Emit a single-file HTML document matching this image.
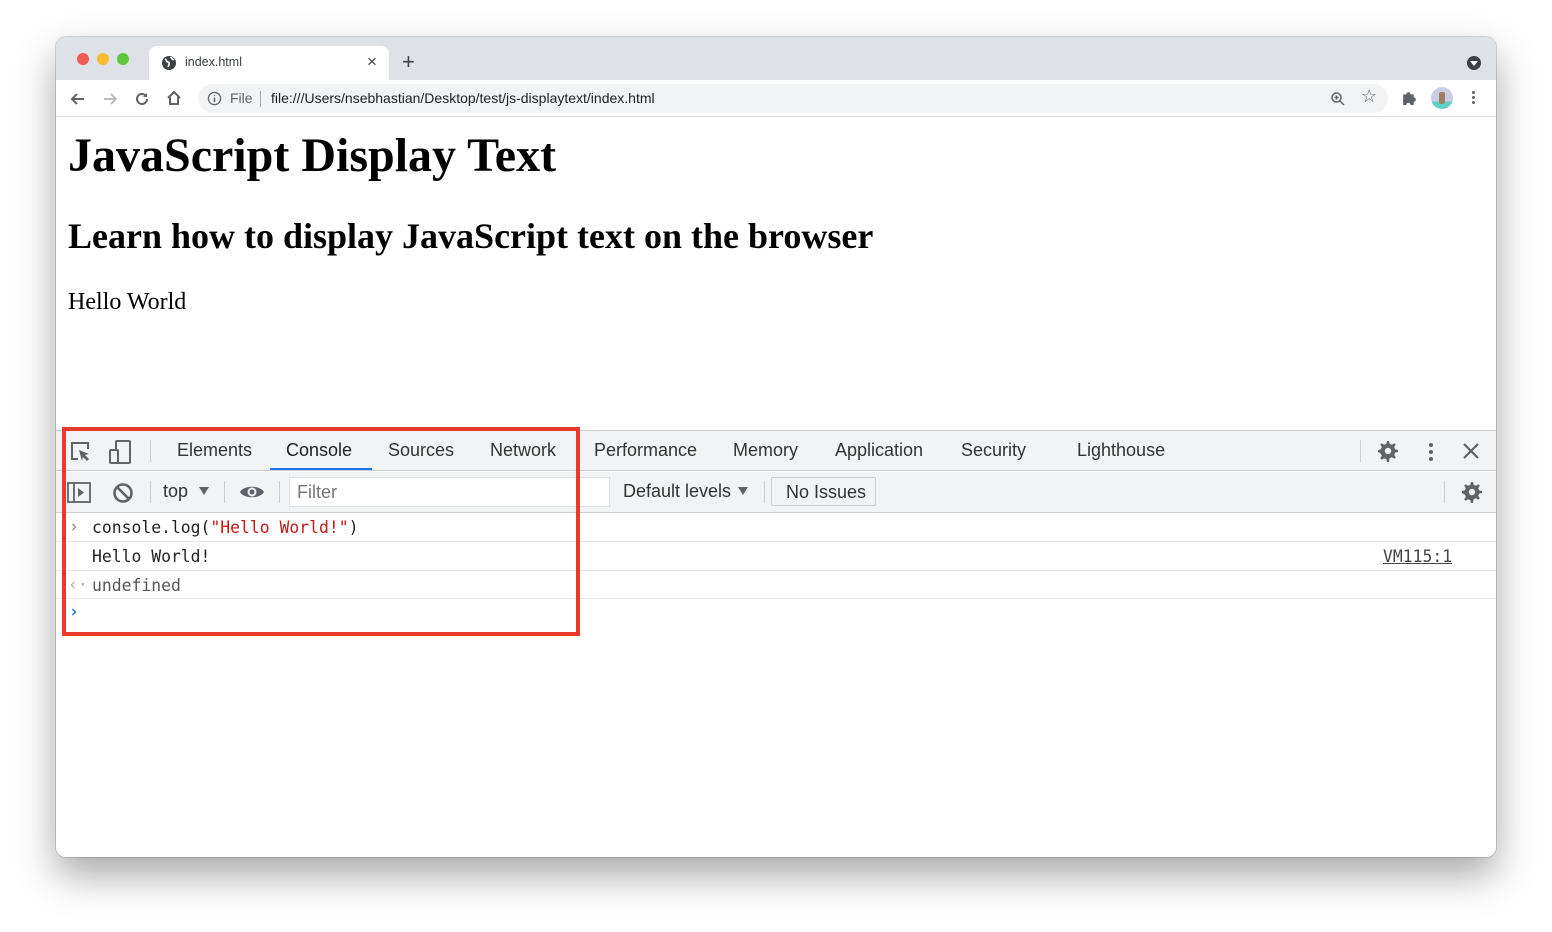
<!DOCTYPE html>
<html><head><meta charset="utf-8"><style>
*{box-sizing:border-box;margin:0;padding:0}
body{width:1552px;height:932px;background:#fff;position:relative;overflow:hidden;font-family:"Liberation Sans",sans-serif}
.win{position:absolute;left:56px;top:37px;width:1440px;height:820px;border-radius:10px;overflow:hidden;background:#fff;box-shadow:0 18px 40px rgba(0,0,0,.35),0 0 0 1px rgba(0,0,0,.15)}
.tabbar{position:absolute;left:0;top:0;width:1440px;height:43px;background:#dee1e6}
.dot{position:absolute;top:16px;width:12px;height:12px;border-radius:50%}
.tab{position:absolute;left:93px;top:9px;width:240px;height:34px;background:#fff;border-radius:8px 8px 0 0}
.tb{position:absolute;left:0;top:43px;width:1440px;height:37px;background:#fff;border-bottom:1px solid #dadce0}
.omni{position:absolute;left:142px;top:4px;width:1190px;height:29px;background:#f1f3f4;border-radius:15px}
.abs{position:absolute}
.dt{position:absolute;left:0;top:393px;width:1440px;height:427px;background:#fff;border-top:1px solid #cbcdd1}
.dtt{position:absolute;left:0;top:0;width:1440px;height:40px;background:#f1f3f4;border-bottom:1px solid #cbcdd1;font-size:18px;color:#333}
.dtc{position:absolute;left:0;top:41px;width:1440px;height:41px;background:#f1f3f4;border-bottom:1px solid #cbcdd1;font-size:18px;color:#333}
.mono{font-family:"DejaVu Sans Mono","Liberation Mono",monospace;font-size:16.4px;color:#222}
.row{position:absolute;left:0;width:1440px;border-bottom:1px solid #e8e8e8}
.sep{position:absolute;width:1px;background:#ccc}
</style></head><body>
<div class="win">
 <div class="tabbar">
  <div class="dot" style="left:21px;background:#ee5c54"></div>
  <div class="dot" style="left:41px;background:#f8bd2e"></div>
  <div class="dot" style="left:61px;background:#5fc73f"></div>
  <div class="tab">
   <svg class="abs" style="left:12px;top:9px" width="16" height="16" viewBox="0 0 16 16"><circle cx="8" cy="8" r="7" fill="#3c4043"/><path d="M4 4c2 1 1 3 3 3s1 3 0 5M10 2c0 2 2 2 3 3" stroke="#fff" stroke-width="1.6" fill="none"/></svg>
   <div class="abs" style="left:36px;top:9px;font-size:12.5px;color:#3c4043">index.html</div>
   <div class="abs" style="left:218px;top:6px;font-size:17px;color:#3c4043">×</div>
  </div>
  <div class="abs" style="left:346px;top:14px;font-size:22px;color:#3c4043;line-height:22px">+</div>
  <div class="abs" style="left:1411px;top:19px;width:14px;height:14px;border-radius:50%;background:#3c4043"><div style="position:absolute;left:3px;top:5px;border-left:4px solid transparent;border-right:4px solid transparent;border-top:5px solid #fff"></div></div>
 </div>
 <div class="tb">
  <svg class="abs" style="left:12px;top:9px" width="20" height="20" viewBox="0 0 20 20"><path d="M16 10H4M9 5l-5 5 5 5" stroke="#5f6368" stroke-width="2" fill="none"/></svg>
  <svg class="abs" style="left:44px;top:9px" width="20" height="20" viewBox="0 0 20 20"><path d="M4 10h12M11 5l5 5-5 5" stroke="#bbb" stroke-width="2" fill="none"/></svg>
  <svg class="abs" style="left:76px;top:9px" width="20" height="20" viewBox="0 0 20 20"><path d="M15 10a5 5 0 1 1-1.5-3.6" stroke="#5f6368" stroke-width="2" fill="none"/><path d="M15 4v4h-4z" fill="#5f6368"/></svg>
  <svg class="abs" style="left:108px;top:8px" width="20" height="20" viewBox="0 0 20 20"><path d="M4 10l6-6 6 6M6 9v7h8V9" stroke="#5f6368" stroke-width="2" fill="none"/></svg>
  <div class="omni">
   <svg class="abs" style="left:9px;top:7px" width="15" height="15" viewBox="0 0 16 16"><circle cx="8" cy="8" r="6.5" stroke="#5f6368" stroke-width="1.4" fill="none"/><path d="M8 7v5M8 4.5v1" stroke="#5f6368" stroke-width="1.6"/></svg>
   <div class="abs" style="left:32px;top:6px;font-size:14px;color:#5f6368">File</div>
   <div class="abs" style="left:62px;top:7px;width:1px;height:16px;background:#aaa"></div>
   <div class="abs" style="left:73px;top:6px;font-size:14px;color:#202124">file:///Users/nsebhastian/Desktop/test/js-displaytext/index.html</div>
   <svg class="abs" style="left:1132px;top:7px" width="16" height="16" viewBox="0 0 16 16"><circle cx="6.5" cy="6.5" r="4.5" stroke="#5f6368" stroke-width="1.5" fill="none"/><path d="M10 10l4 4M4.5 6.5h4M6.5 4.5v4" stroke="#5f6368" stroke-width="1.5"/></svg>
   <div class="abs" style="left:1163px;top:2px;font-size:18px;color:#5f6368">☆</div>
  </div>
  <svg class="abs" style="left:1345px;top:9px" width="17" height="17" viewBox="0 0 16 16"><path d="M2 5h3a2 2 0 1 1 4 0h3v3a2 2 0 1 1 0 4v3H9a2 2 0 1 0-4 0H2z" fill="#5f6368"/></svg>
  <div class="abs" style="left:1375px;top:7px;width:22px;height:22px;border-radius:50%;background:linear-gradient(#c9cde8 65%,#5fd0c8 65%)"><div style="position:absolute;left:8px;top:5px;width:6px;height:12px;background:#a08060;border-radius:2px"></div></div>
  <div class="abs" style="left:1416px;top:11px;width:3px;height:3px;border-radius:50%;background:#5f6368;box-shadow:0 5px #5f6368,0 10px #5f6368"></div>
 </div>
 <div class="abs" style="left:12px;top:89px;font-family:'Liberation Serif',serif;font-weight:bold;font-size:48px;color:#000;line-height:60px">JavaScript Display Text</div>
 <div class="abs" style="left:12px;top:176px;font-family:'Liberation Serif',serif;font-weight:bold;font-size:36px;color:#000;line-height:46px">Learn how to display JavaScript text on the browser</div>
 <div class="abs" style="left:12px;top:250px;font-family:'Liberation Serif',serif;font-size:24px;color:#000;line-height:30px">Hello World</div>

 <div class="dt">
  <div class="dtt">
   <svg class="abs" style="left:13px;top:9px" width="24" height="24" viewBox="0 0 24 24"><path d="M9 19H3V3h16v6" stroke="#5f6368" stroke-width="2" fill="none"/><path d="M10 10l10 4-4 1 4 4-2 2-4-4-1 4z" fill="#5f6368"/></svg>
   <svg class="abs" style="left:52px;top:8px" width="26" height="26" viewBox="0 0 26 26"><rect x="8" y="2" width="14" height="22" rx="1" stroke="#5f6368" stroke-width="2" fill="none"/><rect x="2" y="11" width="8" height="13" rx="1" stroke="#5f6368" stroke-width="2" fill="#f1f3f4"/></svg>
   <div class="sep" style="left:94px;top:9px;height:22px"></div>
   <div class="abs" style="left:121px;top:9px">Elements</div>
   <div class="abs" style="left:230px;top:9px;color:#202124">Console</div>
   <div class="abs" style="left:214px;top:37px;width:102px;height:2px;background:#1a73e8"></div>
   <div class="abs" style="left:332px;top:9px">Sources</div>
   <div class="abs" style="left:434px;top:9px">Network</div>
   <div class="abs" style="left:538px;top:9px">Performance</div>
   <div class="abs" style="left:677px;top:9px">Memory</div>
   <div class="abs" style="left:779px;top:9px">Application</div>
   <div class="abs" style="left:905px;top:9px">Security</div>
   <div class="abs" style="left:1021px;top:9px">Lighthouse</div>
   <div class="sep" style="left:1304px;top:9px;height:22px"></div>
   <svg class="abs" style="left:1320px;top:8px" width="24" height="24" viewBox="0 0 24 24"><path d="M12 2l2 0 .6 2.8 2.3 1 2.4-1.6 1.5 1.5-1.6 2.4 1 2.3L23 11v2l-2.8.6-1 2.3 1.6 2.4-1.5 1.5-2.4-1.6-2.3 1L14 23h-2l-.6-2.8-2.3-1-2.4 1.6-1.5-1.5 1.6-2.4-1-2.3L3 13v-2l2.8-.6 1-2.3-1.6-2.4 1.5-1.5 2.4 1.6 2.3-1z" fill="#5f6368" transform="translate(-1 0)"/><circle cx="12" cy="12" r="3.2" fill="#f1f3f4"/></svg>
   <div class="abs" style="left:1373px;top:12px;width:4px;height:4px;border-radius:50%;background:#5f6368;box-shadow:0 7px #5f6368,0 14px #5f6368"></div>
   <svg class="abs" style="left:1406px;top:11px" width="18" height="18" viewBox="0 0 18 18"><path d="M2 2l14 14M16 2L2 16" stroke="#5f6368" stroke-width="2.2"/></svg>
  </div>
  <div class="dtc">
   <svg class="abs" style="left:11px;top:10px" width="24" height="21" viewBox="0 0 24 21"><rect x="1" y="1" width="22" height="19" stroke="#5f6368" stroke-width="1.8" fill="none"/><path d="M7 1v19" stroke="#5f6368" stroke-width="1.8"/><path d="M11 6l6 4.5-6 4.5z" fill="#5f6368"/></svg>
   <svg class="abs" style="left:56px;top:10px" width="22" height="22" viewBox="0 0 22 22"><circle cx="11" cy="11" r="8.5" stroke="#5f6368" stroke-width="2.6" fill="none"/><path d="M5 5l12 12" stroke="#5f6368" stroke-width="2.6"/></svg>
   <div class="sep" style="left:94px;top:9px;height:22px"></div>
   <div class="abs" style="left:107px;top:9px">top</div>
   <div class="abs" style="left:143px;top:15px;border-left:5px solid transparent;border-right:5px solid transparent;border-top:8px solid #5f6368"></div>
   <div class="sep" style="left:168px;top:9px;height:22px"></div>
   <svg class="abs" style="left:183px;top:10px" width="26" height="20" viewBox="0 0 26 20"><path d="M1 10C5 3 21 3 25 10C21 17 5 17 1 10z" fill="#5f6368"/><circle cx="13" cy="10" r="4.5" fill="#f1f3f4"/><circle cx="13" cy="10" r="2.5" fill="#5f6368"/></svg>
   <div class="sep" style="left:223px;top:9px;height:22px"></div>
   <div class="abs" style="left:233px;top:5px;width:321px;height:30px;background:#fff;border:1px solid #e0e0e0"><div style="position:absolute;left:7px;top:4px;color:#777">Filter</div></div>
   <div class="abs" style="left:567px;top:9px">Default levels</div>
   <div class="abs" style="left:682px;top:15px;border-left:5px solid transparent;border-right:5px solid transparent;border-top:8px solid #5f6368"></div>
   <div class="sep" style="left:708px;top:9px;height:22px"></div>
   <div class="abs" style="left:715px;top:5px;width:105px;height:29px;border:1px solid #ccc;border-radius:2px;padding:4px 0 0 14px">No Issues</div>
   <div class="sep" style="left:1388px;top:9px;height:22px"></div>
   <svg class="abs" style="left:1404px;top:8px" width="24" height="24" viewBox="0 0 24 24"><path d="M12 2l2 0 .6 2.8 2.3 1 2.4-1.6 1.5 1.5-1.6 2.4 1 2.3L23 11v2l-2.8.6-1 2.3 1.6 2.4-1.5 1.5-2.4-1.6-2.3 1L14 23h-2l-.6-2.8-2.3-1-2.4 1.6-1.5-1.5 1.6-2.4-1-2.3L3 13v-2l2.8-.6 1-2.3-1.6-2.4 1.5-1.5 2.4 1.6 2.3-1z" fill="#5f6368" transform="translate(-1 0)"/><circle cx="12" cy="12" r="3.2" fill="#f1f3f4"/></svg>
  </div>
  <div class="row mono" style="top:82px;height:29px">
   <div class="abs" style="left:13px;top:4px;color:#888">›</div>
   <div class="abs" style="left:36px;top:5px">console.log(<span style="color:#c41a16">"Hello World!"</span>)</div>
  </div>
  <div class="row mono" style="top:111px;height:29px">
   <div class="abs" style="left:36px;top:5px">Hello World!</div>
   <div class="abs" style="left:1327px;top:5px;color:#444;text-decoration:underline">VM115:1</div>
  </div>
  <div class="row mono" style="top:140px;height:28px">
   <div class="abs" style="left:12px;top:4px;color:#aaa">‹·</div>
   <div class="abs" style="left:36px;top:5px;color:#555">undefined</div>
  </div>
  <div class="abs mono" style="left:13px;top:171px;color:#1a73e8;font-weight:bold">›</div>
 </div>
 <div class="abs" style="left:6px;top:390px;width:518px;height:209px;border:4px solid #e8392c"></div>
</div>
</body></html>
